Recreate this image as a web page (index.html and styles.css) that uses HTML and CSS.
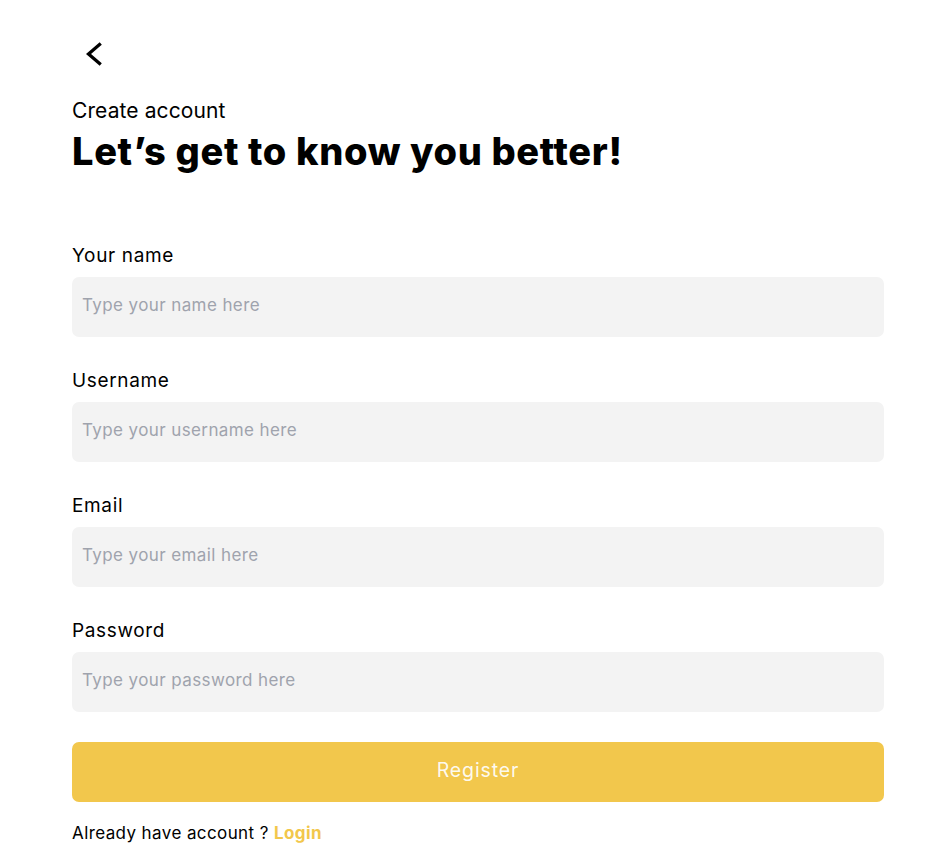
FILE: index.html
```html
<!DOCTYPE html>
<html lang="en">
<head>
<meta charset="utf-8">
<title>Create account</title>
<link rel="stylesheet" href="styles.css">
</head>
<body>
<main class="page">
  <button class="back" type="button" aria-label="Back">
    <svg width="16" height="24" viewBox="0 0 16 24"><path d="M13.5 2.5 L2.5 12 L13.5 21.5" fill="none" stroke="#000" stroke-width="3.3" stroke-linecap="square" stroke-linejoin="miter"/></svg>
  </button>
  <header class="head">
    <p class="eyebrow">Create account</p>
    <h1 class="title">Let’s get to know you better!</h1>
  </header>
  <form class="form">
    <label class="field">
      <span class="label">Your name</span>
      <input class="input" type="text" placeholder="Type your name here">
    </label>
    <label class="field">
      <span class="label">Username</span>
      <input class="input" type="text" placeholder="Type your username here">
    </label>
    <label class="field">
      <span class="label">Email</span>
      <input class="input" type="email" placeholder="Type your email here">
    </label>
    <label class="field">
      <span class="label">Password</span>
      <input class="input" type="password" placeholder="Type your password here">
    </label>
    <button class="submit" type="button">Register</button>
  </form>
  <p class="footer">Already have account ? <a class="link" href="#">Login</a></p>
</main>
</body>
</html>
```
FILE: styles.css
```css
* { box-sizing: border-box; }
html, body { margin: 0; padding: 0; background: #fff; }
body { font-family: Inter, "Noto Sans", sans-serif; color: #000; }
.page {
  width: 812px;
  margin-left: 72px;
  padding-top: 42px;
  display: flex;
  flex-direction: column;
}
.back {
  align-self: flex-start;
  margin: 0 0 0 14px;
  padding: 0;
  border: 0;
  background: none;
  width: 16px;
  height: 24px;
  display: block;
  cursor: pointer;
}
.back svg { display: block; }
.head { margin-top: 30px; display: flex; flex-direction: column; gap: 3px; }
.eyebrow { margin: 0; font-size: 21px; line-height: 30px; font-weight: 400; letter-spacing: 0.1px; }
.title { margin: 0; font-size: 38px; line-height: 44px; font-weight: 800; letter-spacing: 0.65px; }
.form { margin-top: 69px; display: flex; flex-direction: column; gap: 30px; }
.field { display: flex; flex-direction: column; gap: 7px; }
.label { font-size: 19px; line-height: 28px; font-weight: 400; letter-spacing: 0.65px; }
.input {
  height: 60px;
  border: 0;
  border-radius: 7px;
  background: #f3f3f3;
  padding: 0 10px 5px;
  font-family: inherit;
  font-size: 17px;
  letter-spacing: 0.4px;
  color: #000;
  outline: none;
}
.input::placeholder { color: #9fa3ad; }
.submit {
  height: 60px;
  border: 0;
  border-radius: 7px;
  background: #f2c74c;
  color: rgba(255,255,255,0.92);
  font-family: inherit;
  font-size: 19.5px;
  font-weight: 400;
  letter-spacing: 0.9px;
  padding: 0 0 5px;
  cursor: pointer;
}
.footer { margin: 21px 0 0; font-size: 17px; line-height: 20px; letter-spacing: 0.4px; }
.link { color: #f2c74c; font-weight: 700; text-decoration: none; }
```
